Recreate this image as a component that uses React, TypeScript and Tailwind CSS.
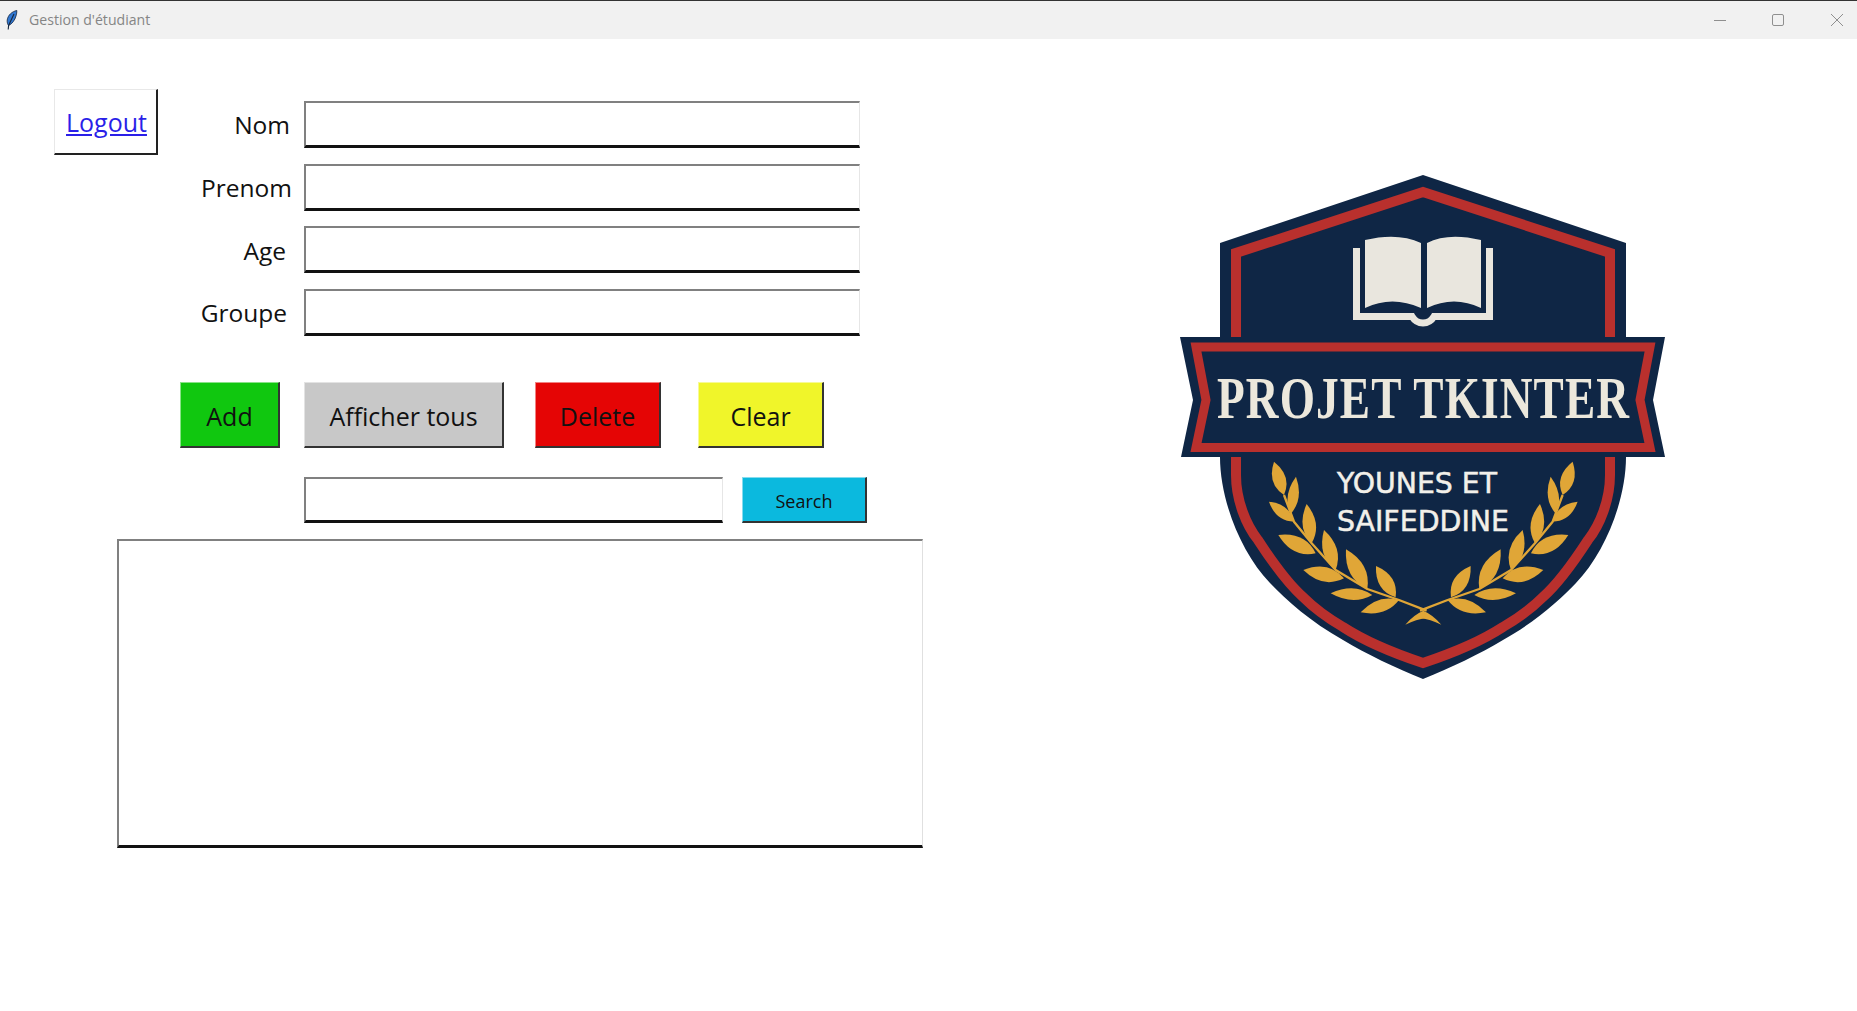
import React from 'react';

const uiFont = "font-['Open_Sans','Noto_Sans',sans-serif]";

// [tipX, tipY, baseX, baseY, width] in 3x units, left branch of the wreath
const leaves = [
  [312, 65, 342, 165, 40],
  [378, 110, 362, 222, 33],
  [297, 185, 372, 245, 33],
  [410, 192, 425, 310, 40],
  [325, 285, 437, 340, 44],
  [462, 270, 497, 390, 42],
  [400, 390, 522, 415, 44],
  [528, 328, 592, 447, 46],
  [482, 460, 607, 465, 35],
  [618, 378, 677, 472, 42],
  [572, 517, 687, 480, 37],
];

const leafPath = ([x1, y1, x2, y2, w]: number[]) => {
  const mx = x1 + (x2 - x1) * 0.55;
  const my = y1 + (y2 - y1) * 0.55;
  const len = Math.hypot(x2 - x1, y2 - y1);
  const nx = (-(y2 - y1) / len) * w;
  const ny = ((x2 - x1) / len) * w;
  return `M${x1},${y1} Q${mx + nx},${my + ny} ${x2},${y2} Q${mx - nx},${my - ny} ${x1},${y1} Z`;
};

const Branch = () => (
  <g fill="#e0a637">
    {leaves.map((l, i) => (
      <path key={i} d={leafPath(l)} />
    ))}
    <path d="M342,165 L372,245 L425,310 L497,390 L592,447 L687,480 L770,512" fill="none" stroke="#e0a637" strokeWidth="7" strokeLinejoin="round" />
    <path d="M760,512 Q790,525 814,554 Q780,538 752,534 Z" />
  </g>
);

const Logo = () => (
  <svg width="500" height="530" viewBox="1170 160 500 530" className="shrink-0">
    {/* shield */}
    <path
      d="M1423,175 L1626,243 L1626,457 C1626,500 1605,553 1576,583 C1560,600 1535,622 1503,640 C1480,654 1450,668 1423,679 C1396,668 1366,654 1343,640 C1311,622 1286,600 1270,583 C1241,553 1220,500 1220,457 L1220,243 Z"
      fill="#0f2645"
    />
    <path
      d="M1236,337 L1236,253 L1423,192 L1610,253 L1610,337 M1610,450 V475 C1610,500 1600,525 1588,540 C1575,560 1560,582 1543,597 C1530,610 1515,620 1503,627 C1480,642 1450,654 1423,663 C1396,654 1366,642 1343,627 C1331,620 1316,610 1303,597 C1286,582 1271,560 1258,540 C1246,525 1236,500 1236,475 V450"
      fill="none"
      stroke="#b9302d"
      strokeWidth="10"
    />
    {/* book */}
    <path
      d="M1356.5,248 V316.5 H1412 Q1416,323 1423,323 Q1430,323 1434,316.5 H1489.5 V248"
      fill="none"
      stroke="#e9e6de"
      strokeWidth="7"
    />
    <path d="M1365,240 Q1398,232 1421,243 V308 Q1392,295 1365,308 Z" fill="#e9e6de" />
    <path d="M1481,240 Q1448,232 1427,243 V308 Q1454,295 1481,308 Z" fill="#e9e6de" />
    {/* banner */}
    <path d="M1180,337 H1665 L1653,400 L1665,457 H1181 L1193,400 Z" fill="#0f2645" />
    <path d="M1196,347 H1650 L1640,400 L1650,447.5 H1196 L1206,400 Z" fill="none" stroke="#b9302d" strokeWidth="9" />
    <text
      transform="translate(1217 418) scale(0.755 1)"
      fill="#ece8dc"
      className="font-['Liberation_Serif',serif] font-bold text-[60px] tracking-[1.5px]"
    >
      PROJET TKINTER
    </text>
    <text x="1337" y="493" textLength="160" lengthAdjust="spacingAndGlyphs" fill="#f2f0ea" stroke="#f2f0ea" strokeWidth="0.5" className="font-['DejaVu_Sans',sans-serif] text-[28px]">
      YOUNES ET
    </text>
    <text x="1337" y="531" textLength="172" lengthAdjust="spacingAndGlyphs" fill="#f2f0ea" stroke="#f2f0ea" strokeWidth="0.5" className="font-['DejaVu_Sans',sans-serif] text-[28px]">
      SAIFEDDINE
    </text>
    {/* wreath */}
    <g transform="translate(1170 440) scale(0.3333)">
      <Branch />
      <g transform="translate(1520 0) scale(-1 1)">
        <Branch />
      </g>
    </g>
  </svg>
);

const Feather = () => (
  <svg width="12" height="20" viewBox="0 0 12 20" className="ml-[6px] -mt-[1px] shrink-0">
    <path d="M10.8,0.5 C6,1.5 2,5 1.2,10 C1,12.5 1.6,14.5 2.6,15.5 C6,14 9,10 10,6 C10.6,4 11,2 10.8,0.5 Z" fill="#3178d2" stroke="#14253f" strokeWidth="0.8" />
    <path d="M8,4 L2.6,15.5 L2.2,19.5" fill="none" stroke="#16263d" strokeWidth="1.1" />
  </svg>
);

const TitleBar = () => (
  <div className="flex h-[39px] shrink-0 items-center border-t border-[#333333] bg-[#f1f1f1]">
    <Feather />
    <span className={`ml-[11px] -mt-[1px] text-[14.1px] text-[#858585] ${uiFont}`}>Gestion d'étudiant</span>
    <svg width="12" height="12" viewBox="0 0 12 12" className="ml-auto">
      <path d="M0,6.5 H12" stroke="#8f8f8f" strokeWidth="1" />
    </svg>
    <svg width="12" height="12" viewBox="0 0 12 12" className="ml-[46px]">
      <rect x="0.5" y="0.5" width="11" height="11" rx="1.5" fill="none" stroke="#8f8f8f" />
    </svg>
    <svg width="12" height="12" viewBox="0 0 12 12" className="ml-[47px] mr-[14px]">
      <path d="M0,0 L12,12 M12,0 L0,12" stroke="#8f8f8f" strokeWidth="1" />
    </svg>
  </div>
);

const Entry = ({ className = '' }: { className?: string }) => (
  <input
    type="text"
    className={`block border-t-2 border-l-2 border-r border-b-[3px] border-t-[#808080] border-l-[#808080] border-r-[#e6e6e6] border-b-[#111111] bg-white outline-none ${className}`}
  />
);

const TkButton = ({ label, className }: { label: string; className: string }) => (
  <button
    type="button"
    className={`flex items-center justify-center border-t border-l border-r-2 border-b-2 border-t-white/50 border-l-white/50 border-r-[#333333] border-b-[#333333] text-[#111111] ${uiFont} ${className}`}
  >
    {label}
  </button>
);

const fields = [
  { label: 'Nom', right: 'pr-[14px]' },
  { label: 'Prenom', right: 'pr-[12px]' },
  { label: 'Age', right: 'pr-[18px]' },
  { label: 'Groupe', right: 'pr-[17px]' },
];

export default function App() {
  return (
    <div className="flex min-h-screen flex-col bg-white">
      <TitleBar />
      <div className="flex">
        <div className="w-[1170px] shrink-0">
          {/* logout + form */}
          <div className="flex items-start pl-[54px]">
            <a
              href="#"
              className={`mt-[50px] flex h-[66px] w-[104px] items-center justify-center border-t border-l border-r-2 border-b-2 pl-[2px] pt-[2px] border-t-[#e8e8e8] border-l-[#e8e8e8] border-r-[#222222] border-b-[#222222] text-[25px] text-[#2a1fe8] underline ${uiFont}`}
            >
              Logout
            </a>
            <div className="mt-[62px] flex flex-col gap-[15.7px]">
              {fields.map((f) => (
                <div key={f.label} className="flex h-[47px] items-center">
                  <label className={`w-[146px] pt-[2px] text-right text-[24.5px] text-[#111111] ${f.right} ${uiFont}`}>{f.label}</label>
                  <Entry className="h-[47px] w-[556px]" />
                </div>
              ))}
            </div>
          </div>

          {/* action buttons */}
          <div className="mt-[46px] flex pl-[180px]">
            <TkButton label="Add" className="h-[66px] w-[100px] bg-[#10c70f] pt-[5px] text-[25px]" />
            <TkButton label="Afficher tous" className="ml-[24px] h-[66px] w-[200px] bg-[#c8c8c8] pt-[5px] text-[25px]" />
            <TkButton label="Delete" className="ml-[31px] h-[66px] w-[126px] bg-[#e50505] pt-[5px] text-[25px]" />
            <TkButton label="Clear" className="ml-[37px] h-[66px] w-[126px] bg-[#f0f52a] pt-[5px] text-[25px]" />
          </div>

          {/* search */}
          <div className="mt-[29px] flex pl-[304px]">
            <Entry className="h-[46px] w-[419px]" />
            <TkButton label="Search" className="ml-[19px] h-[46px] w-[125px] bg-[#0bb9de] pt-[3px] text-[18px]" />
          </div>

          {/* listbox */}
          <div className="ml-[117px] mt-[16px] h-[309px] w-[806px] border-t-2 border-l-2 border-r border-b-[3px] border-t-[#808080] border-l-[#808080] border-r-[#e0e0e0] border-b-[#111111] bg-white" />
        </div>

        <div className="mt-[121px]">
          <Logo />
        </div>
      </div>
    </div>
  );
}
